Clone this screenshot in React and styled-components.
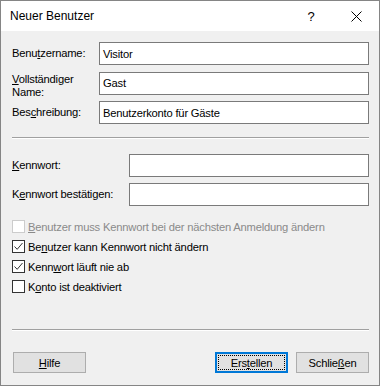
import styled, { createGlobalStyle } from "styled-components"

const GlobalStyle = createGlobalStyle`
  html, body {
    margin: 0;
    padding: 0;
    background: #ffffff;
  }
  body {
    font-family: "Liberation Sans", Arial, sans-serif;
    font-size: 12px;
    color: #000;
  }
`

const Window = styled.div`
  width: 380px;
  height: 386px;
  box-sizing: border-box;
  border: 1px solid #858585;
  background: #f0f0f0;
  display: flex;
  flex-direction: column;
`

const TitleBar = styled.div`
  height: 30px;
  flex: none;
  background: #fff;
  display: flex;
  align-items: center;
  padding-left: 9px;
`

const Title = styled.span`
  flex: 1;
  font-size: 12px;
`

const TitleButton = styled.div`
  width: 46px;
  height: 30px;
  display: flex;
  align-items: center;
  justify-content: center;
  font-size: 13px;
  padding-left: ${p => p.$shift || 0}px;
  box-sizing: border-box;
`

const Body = styled.div`
  flex: 1;
  display: flex;
  flex-direction: column;
  padding: 11px 10px 12px 11px;
  font-size: 11.2px;
  letter-spacing: -0.2px;
`

const FieldGrid = styled.div`
  display: grid;
  grid-template-columns: ${p => p.$labelWidth}px 1fr;
  grid-auto-rows: 23px;
  row-gap: ${p => p.$gap}px;
  align-items: center;
`

const Label = styled.label`
  line-height: 13px;
  align-self: ${p => (p.$top ? "start" : "center")};
  margin-top: ${p => (p.$top ? "1px" : "0")};
`

const TextBox = styled.div`
  height: 23px;
  box-sizing: border-box;
  border: 1px solid #7a7a7a;
  background: #fff;
  padding: 0 3px;
  display: flex;
  align-items: center;
`

const Key = styled.u`
  text-decoration: underline;
  text-underline-offset: 1px;
`

const Separator = styled.div`
  height: 1px;
  background: #a0a0a0;
  border-bottom: 1px solid #fff;
  margin: ${p => p.$margin};
`

const CheckList = styled.div`
  display: flex;
  flex-direction: column;
  gap: 7px;
  margin-top: 14px;
`

const CheckRow = styled.div`
  display: flex;
  align-items: center;
  gap: 3px;
  height: 13px;
  color: ${p => (p.$disabled ? "#8a8a8a" : "#000")};
`

const Box = styled.span`
  width: 13px;
  height: 13px;
  box-sizing: border-box;
  border: 1px solid ${p => (p.$disabled ? "#cccccc" : "#333333")};
  background: #fff;
  display: flex;
  align-items: center;
  justify-content: center;
  flex: none;
`

const Spacer = styled.div`
  flex: 1;
`

const ButtonRow = styled.div`
  display: flex;
  align-items: center;
  gap: 8px;
  padding-left: 1px;
`

const Button = styled.div`
  width: 73px;
  height: 21px;
  box-sizing: border-box;
  background: #e1e1e1;
  border: ${p => (p.$default ? "2px solid #0078d7" : "1px solid #adadad")};
  display: flex;
  align-items: center;
  justify-content: center;
  margin-left: ${p => (p.$push ? "auto" : "0")};
  position: relative;

  &::after {
    content: "";
    display: ${p => (p.$default ? "block" : "none")};
    position: absolute;
    inset: 1px;
    border: 1px dotted #000;
  }
`

function Check({ checked, disabled, children }) {
  return (
    <CheckRow $disabled={disabled}>
      <Box $disabled={disabled}>
        {checked && (
          <svg width="11" height="11" viewBox="0 0 11 11">
            <path d="M1.5 5.5 L4.2 8.3 L9.5 2" fill="none" stroke="#333" strokeWidth="1" />
          </svg>
        )}
      </Box>
      <span>{children}</span>
    </CheckRow>
  )
}

export default function App() {
  return (
    <>
      <GlobalStyle />
      <Window>
        <TitleBar>
          <Title>Neuer Benutzer</Title>
          <TitleButton $shift={2}>?</TitleButton>
          <TitleButton>
            <svg width="11" height="11" viewBox="0 0 11 11">
              <path d="M0.5 0.5 L10.5 10.5 M10.5 0.5 L0.5 10.5" stroke="#000" strokeWidth="1" />
            </svg>
          </TitleButton>
        </TitleBar>

        <Body>
          <FieldGrid $labelWidth={87} $gap={6.5}>
            <Label>Benu<Key>t</Key>zername:</Label>
            <TextBox>Visitor</TextBox>
            <Label $top><Key>V</Key>ollständiger<br />Name:</Label>
            <TextBox>Gast</TextBox>
            <Label>Bes<Key>c</Key>hreibung:</Label>
            <TextBox>Benutzerkonto für Gäste</TextBox>
          </FieldGrid>

          <Separator $margin="13px 0 15px 0" />

          <FieldGrid $labelWidth={117} $gap={6}>
            <Label><Key>K</Key>ennwort:</Label>
            <TextBox />
            <Label>K<Key>e</Key>nnwort bestätigen:</Label>
            <TextBox />
          </FieldGrid>

          <CheckList>
            <Check disabled><Key>B</Key>enutzer muss Kennwort bei der nächsten Anmeldung ändern</Check>
            <Check checked>Be<Key>n</Key>utzer kann Kennwort nicht ändern</Check>
            <Check checked>Kenn<Key>w</Key>ort läuft nie ab</Check>
            <Check>K<Key>o</Key>nto ist deaktiviert</Check>
          </CheckList>

          <Spacer />
          <Separator $margin="0 0 21px 0" />

          <ButtonRow>
            <Button><Key>H</Key>ilfe</Button>
            <Button $default $push>Ers<Key>t</Key>ellen</Button>
            <Button>Schlie<Key>ß</Key>en</Button>
          </ButtonRow>
        </Body>
      </Window>
    </>
  )
}
